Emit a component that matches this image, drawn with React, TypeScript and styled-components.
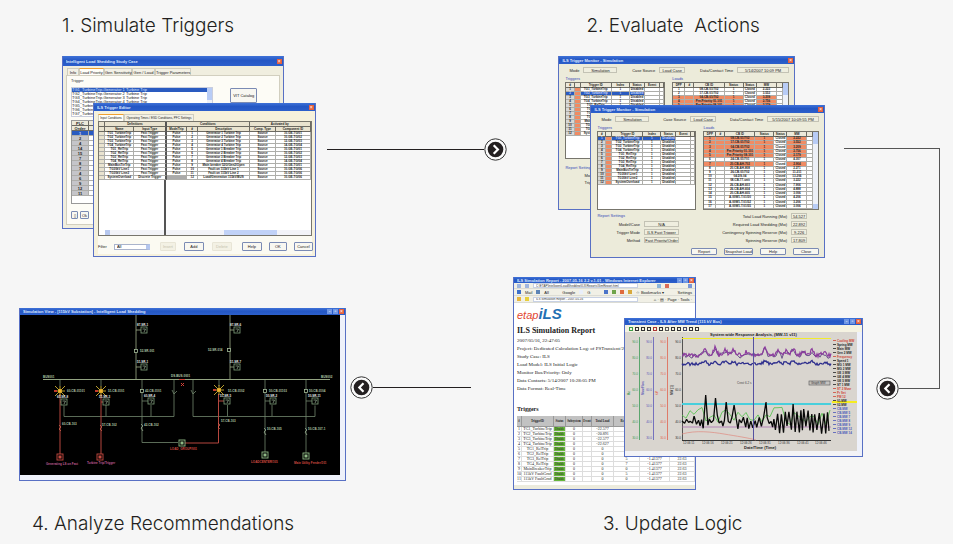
import React from "react";
import styled, { createGlobalStyle, css } from "styled-components";

const GlobalStyle = createGlobalStyle`
  * { box-sizing: border-box; }
  body { margin: 0; background: #f6f6f6; font-family: "Liberation Sans", Arial, sans-serif; color: #231f20; }
  button, input, select { font-family: inherit; }
`;

/* ---------- page layout ---------- */

const Page = styled.main`
  overflow: hidden;
`;

const Row = styled.div<{ $lower?: boolean }>`
  display: flex;
  align-items: flex-start;
  padding: ${(p) => (p.$lower ? "0 13px 8px 19px" : "14px 13px 19px 62px")};
  ${(p) => p.$lower && css`align-items: flex-end;`}
`;

const Step = styled.section<{ $grow: number }>`
  flex: ${(p) => p.$grow} 1 0;
  min-width: 0;
`;

const Heading = styled.h2<{ $indent: number; $gap?: number }>`
  margin: ${(p) => p.$gap ?? 0}px 0 0 ${(p) => p.$indent}px;
  font-family: Inter, "Liberation Sans", Arial, sans-serif;
  font-size: 19px;
  line-height: 24px;
  font-weight: 300;
  white-space: pre;
`;

const Stack = styled.div<{ $gap?: number }>`
  display: grid;
  margin-top: ${(p) => p.$gap ?? 0}px;
`;

const Link = styled.div<{ $grow: number; $margin: string; $reverse?: boolean; $top?: boolean }>`
  flex: ${(p) => p.$grow} 1 0;
  display: flex;
  flex-direction: ${(p) => (p.$reverse ? "row-reverse" : "row")};
  align-items: center;
  margin: ${(p) => p.$margin};
  ${(p) => p.$top && css`align-self: flex-start;`}
`;

const Line = styled.span`
  flex: 1;
  height: 1px;
  background: #231f20;
`;

const CornerDown = styled.div`
  flex: 95 1 0;
  align-self: stretch;
  margin: 134px 0 -19px 19px;
  border: solid #555;
  border-width: 1px 1px 0 0;
`;

const CornerBack = styled.div`
  flex: 64 1 0;
  align-self: flex-start;
  display: flex;
  align-items: flex-end;
  height: 123px;
  margin-left: 13px;
`;

const CornerEdge = styled.span`
  flex: 1;
  height: 112px;
  margin-bottom: 11px;
  border: solid #555;
  border-width: 0 1px 1px 0;
`;

const ArrowSvg = styled.svg`
  flex: none;
  width: 23px;
  height: 23px;
`;

function Arrow({ left }: { left?: boolean }) {
  return (
    <ArrowSvg viewBox="0 0 23 23">
      <circle cx="11.5" cy="11.5" r="10.7" fill="#fafafa" stroke="#333" strokeWidth="1" />
      <circle cx="11.5" cy="11.5" r="7.8" fill="#231f20" />
      <path d={left ? "M13.5 7.2 9.3 11.5 13.5 15.8" : "M9.7 7.2 13.9 11.5 9.7 15.8"} fill="none" stroke="#fff" strokeWidth="2.2" />
    </ArrowSvg>
  );
}

/* ---------- window chrome ---------- */

const Frame = styled.article<{ $margin?: string; $height: number; $bg?: string }>`
  grid-area: 1 / 1;
  display: flex;
  flex-direction: column;
  min-width: 0;
  min-height: ${(p) => p.$height}px;
  margin: ${(p) => p.$margin ?? "0"};
  border: 1px solid #5870c4;
  border-top: 0;
  background: ${(p) => p.$bg ?? "#f0eedf"};
  overflow: hidden;
  font-size: 4px;
  line-height: 5px;
  white-space: nowrap;
  color: #222;
`;

const TitleBar = styled.header<{ $h: number }>`
  flex: none;
  display: flex;
  align-items: center;
  gap: 1px;
  height: ${(p) => p.$h}px;
  padding: 0 1px 0 3px;
  background: linear-gradient(#3f72d8, #2457c4 45%, #2c5fcb);
  color: #dfe8ff;
  font-weight: 700;
  font-size: 4px;
`;

const TitleText = styled.span`
  flex: 1;
  overflow: hidden;
`;

const Caption = styled.button<{ $close?: boolean }>`
  width: 5px;
  height: 5px;
  padding: 0;
  border: 0;
  background: ${(p) => (p.$close ? "#e5603c" : "#6f96e4")};
  color: #fff;
  font-size: 5px;
  line-height: 5px;
`;

function Bar({ title, h = 8, full }: { title: string; h?: number; full?: boolean }) {
  return (
    <TitleBar $h={h}>
      <TitleText>{title}</TitleText>
      {full && <Caption aria-label="Minimize">-</Caption>}
      {full && <Caption aria-label="Maximize">▫</Caption>}
      <Caption $close aria-label="Close">×</Caption>
    </TitleBar>
  );
}

const Tabs = styled.nav<{ $h: number }>`
  flex: none;
  display: flex;
  align-items: flex-end;
  height: ${(p) => p.$h}px;
  padding: 0 4px;
`;

const Tab = styled.button<{ $on?: boolean; $w: number; $small?: boolean }>`
  width: ${(p) => p.$w}px;
  height: 7px;
  padding: 0;
  border: 1px solid #cfcdbf;
  border-bottom: 0;
  border-top-color: ${(p) => (p.$on ? "#f0a030" : "#cfcdbf")};
  background: ${(p) => (p.$on ? "#fffef8" : "#f3f1e6")};
  color: #222;
  font-size: ${(p) => (p.$small ? 3 : 4)}px;
  line-height: 5px;
  white-space: nowrap;
`;

const Push = styled.button<{ $w: number; $h?: number; $flat?: boolean }>`
  flex: none;
  width: ${(p) => p.$w}px;
  height: ${(p) => p.$h ?? 9}px;
  padding: 0;
  border: 1px solid ${(p) => (p.$flat ? "#e8e5d6" : "#7b8bb4")};
  border-radius: 1px;
  background: ${(p) => (p.$flat ? "#f3f1e4" : "#f8f7f1")};
  color: ${(p) => (p.$flat ? "#c4c1ae" : "#222")};
  font-size: 4px;
  line-height: 5px;
  white-space: nowrap;
`;

/* ---------- data grids ---------- */

const Table = styled.table<{ $head?: string }>`
  width: 100%;
  table-layout: fixed;
  border-collapse: separate;
  border-spacing: 0;
  font-size: 3px;
  line-height: 3px;
  font-weight: 700;
  text-align: center;
  color: #1c1c1c;
  th {
    height: 5px;
    padding: 0;
    border: solid #6c6a62;
    border-width: 0 1px 1px 0;
    background: ${(p) => p.$head ?? "#ece9da"};
    font-weight: inherit;
  }
`;

const Col = styled.col<{ $w: number }>`
  width: ${(p) => p.$w}px;
`;

const Td = styled.td<{ $bg?: string; $fg?: string; $h?: number }>`
  height: ${(p) => p.$h ?? 4}px;
  padding: 0;
  border: solid #aeaeaa;
  border-width: 0 1px 1px 0;
  background: ${(p) => p.$bg ?? "transparent"};
  color: ${(p) => p.$fg ?? "#1c1c1c"};
`;

const ORANGE = "#f08b63";
const BLUE = "#2a5bc0";

interface GridProps {
  cols: number[];
  head: React.ReactNode;
  rows: string[][];
  rowHeight?: number;
  headBg?: string;
  paint?: (r: number, c: number) => string | undefined;
}

function DataGrid({ cols, head, rows, rowHeight, headBg, paint }: GridProps) {
  return (
    <Table $head={headBg}>
      <colgroup>{cols.map((w, i) => <Col key={i} $w={w} />)}</colgroup>
      <thead>{head}</thead>
      <tbody>
        {rows.map((row, r) => (
          <tr key={r}>
            {row.map((text, c) => {
              const bg = paint?.(r, c);
              return <Td key={c} $h={rowHeight} $bg={bg} $fg={bg === BLUE ? "#cfdcff" : undefined}>{text}</Td>;
            })}
          </tr>
        ))}
      </tbody>
    </Table>
  );
}

const heads = (labels: string[]) => <tr>{labels.map((l, i) => <th key={i}>{l}</th>)}</tr>;

const Well = styled.div<{ $h: number }>`
  display: flex;
  flex-direction: column;
  justify-content: space-between;
  height: ${(p) => p.$h}px;
  min-width: 0;
  border: 1px solid #77756c;
  background: #fff;
  overflow: hidden;
`;

const Side = styled.div`
  display: flex;
  > :first-child { flex: 1; min-width: 0; }
`;

const VScroll = styled.div<{ $h?: number }>`
  flex: none;
  width: 5px;
  height: ${(p) => (p.$h ? `${p.$h}px` : "auto")};
  background: linear-gradient(#b8ccf6 0 12px, #eef1f8 12px calc(100% - 5px), #b8ccf6 calc(100% - 5px));
`;

/* ---------- step 1 ---------- */

const CaseBody = styled.div`
  flex: 1;
  margin: 0 3px 3px;
  padding: 2px 4px;
  border: 1px solid #d2cfbf;
  background: #fdfcf6;
`;

const CaseTop = styled.div`
  display: grid;
  grid-template-columns: 142fr 62fr;
`;

const List = styled.ul`
  flex: 1;
  margin: 0;
  padding: 0;
  list-style: none;
  background: #fff;
  color: #222;
`;

const Item = styled.li<{ $on?: boolean }>`
  height: 4px;
  line-height: 4px;
  background: ${(p) => (p.$on ? BLUE : "transparent")};
  color: ${(p) => (p.$on ? "#d7e2ff" : "#111")};
`;

const Label = styled.div<{ $h?: number; $blue?: boolean }>`
  height: ${(p) => p.$h ?? 6}px;
  color: ${(p) => (p.$blue ? "#3548b8" : "#333")};
`;

const ListBox = styled.div`
  display: flex;
  border: 1px solid #c9cddc;
`;

const Centered = styled.div<{ $top?: number }>`
  display: flex;
  justify-content: center;
  align-items: flex-start;
  padding-top: ${(p) => p.$top ?? 0}px;
`;

const PlcTable = styled.div`
  width: 96px;
  margin-top: 3px;
  height: 84px;
  border: 1px solid #999;
  background: #fff;
  overflow: hidden;
  table { font-size: 4px; }
`;

const ButtonLine = styled.div<{ $top?: number; $gap?: number }>`
  display: flex;
  align-items: center;
  gap: ${(p) => p.$gap ?? 2}px;
  margin-top: ${(p) => p.$top ?? 0}px;
`;

function StudyCase() {
  const triggers = [1, 2, 3, 4, 5, 6, 7].map((n) => `TG${n}_TurbineTrip-Generator ${n} Turbine Trip`);
  const order = ["1", "2", "4", "14", "15", "7", "8", "7", "4", "6", "9", "12", "11"];
  return (
    <Frame $height={173} $margin="0 32px 28px 0">
      <Bar title="Intelligent Load Shedding Study Case" h={10} />
      <Tabs $h={9}>
        <Tab $w={12}>Info</Tab><Tab $w={25} $on>Load Priority</Tab><Tab $w={28}>Gen Sensitivity</Tab>
        <Tab $w={23}>Gen / Load</Tab><Tab $w={36}>Trigger Parameters</Tab>
      </Tabs>
      <CaseBody>
        <CaseTop>
          <div>
            <Label $h={9}>Trigger</Label>
            <ListBox>
              <List>{triggers.map((t, i) => <Item key={t} $on={i === 0}>{t}</Item>)}</List>
              <VScroll />
            </ListBox>
          </div>
          <Centered $top={10}><Push $w={27} $h={15}>VIT Catalog</Push></Centered>
        </CaseTop>
        <PlcTable>
          <DataGrid
            cols={[17, 25, 54]}
            rowHeight={5}
            head={<><tr><th>PLC</th><th>Priority</th><th>Load</th></tr><tr><th>Order</th><th>Cat.</th><th>ID</th></tr></>}
            rows={order.map((n) => [n, "", ""])}
            paint={(r, c) => (r === 0 ? BLUE : c === 0 ? "#c5c5c9" : undefined)}
          />
        </PlcTable>
        <ButtonLine $top={7}><Push $w={7} $h={8}>▯</Push><Push $w={9} $h={8}>Ok</Push></ButtonLine>
      </CaseBody>
    </Frame>
  );
}

const EditorBody = styled.div`
  flex: 1;
  display: flex;
  flex-direction: column;
  margin: 0 3px 2px 4px;
  background: #fbfaf2;
`;

const EditorGrid = styled.div`
  flex: 1;
  background: linear-gradient(90deg, #e9e3cf 0 6px, transparent 6px);
  th:nth-child(3), td:nth-child(3), tr:first-child > th:nth-child(2) { border-right: 2px solid #555; }
  tr:first-child > th:nth-child(3) { border-right: 1px solid #6c6a62; }
`;

const HScroll = styled.div`
  display: grid;
  grid-template-columns: 67fr 58fr 52fr 34fr;
  height: 5px;
  background: #f2f3f8;
  > :nth-child(1) { border-right: 2px solid #555; background: linear-gradient(90deg, #fff 0 6px, #b7c8ee 6px 11px, #f2f3f8 11px); }
  > :nth-child(3) { background: #c1d2f7; }
`;

const SplitSpace = styled.div`
  display: grid;
  grid-template-columns: 67fr 144fr;
  height: 52px;
  > :first-child { border-right: 2px solid #555; }
`;

const Footer = styled.footer<{ $gap: number; $top: number }>`
  display: flex;
  align-items: center;
  gap: ${(p) => p.$gap}px;
  padding-top: ${(p) => p.$top}px;
`;

const Select = styled.select`
  appearance: none;
  width: 36px;
  height: 6px;
  padding: 0 2px;
  border: 1px solid #aab4cc;
  border-right: 4px solid #b4c6ee;
  border-radius: 0;
  background: #fff;
  font-size: 4px;
  line-height: 4px;
`;

const Group = styled.div<{ $gap: number; $end?: boolean }>`
  display: flex;
  align-items: center;
  gap: ${(p) => p.$gap}px;
  ${(p) => p.$end && css`margin-left: auto;`}
`;

function TriggerEditor() {
  const names: [string, string, string, string][] = [
    ["TG1_TurbineTrip", "Generator 1 Turbine Trip", "Source", "10-GE-TG/01"],
    ["TG2_TurbineTrip", "Generator 2 Turbine Trip", "Source", "10-GE-TG/02"],
    ["TG3_TurbineTrip", "Generator 3 Turbine Trip", "Source", "12-GE-TG/03"],
    ["TG4_TurbineTrip", "Generator 4 Turbine Trip", "Source", "14-GE-TG/04"],
    ["TG1_RelTrip", "Generator 1 Breaker Trip", "Source", "10-GE-TG/01"],
    ["TG2_RelTrip", "Generator 2 Breaker Trip", "Source", "10-GE-TG/02"],
    ["TG3_RelTrip", "Generator 3 Breaker Trip", "Source", "12-GE-TG/03"],
    ["TG4_RelTrip", "Generator 4 Breaker Trip", "Source", "14-GE-TG/04"],
    ["MainBusTieTrip", "Main breaker 52G/Gen2/Open", "Source", "10-GE-TG/01"],
    ["TG30kV Line1", "Fault on 115kV Line 1", "Source", "10-GE-TG/06"],
    ["TG30kV Line2", "Fault on 115kV Line 2", "Source", "10-GE-TG/06"],
    ["SystemOverload", "Load/Generation 115kV/BUS", "Source", "10-GE-TG/06"],
  ];
  return (
    <Frame $height={154} $margin="47px 0 0 31px" $bg="#f6f1dc">
      <Bar title="ILS Trigger Editor" />
      <Tabs $h={10}>
        <Tab $w={26} $on $small>Input Conditions</Tab><Tab $w={70} $small>Operating Times / ESD Conditions, PFC Settings</Tab>
      </Tabs>
      <EditorBody>
        <Well $h={115}>
          <EditorGrid>
            <DataGrid
              cols={[6, 29, 32, 20, 11, 51, 26, 34]}
              headBg="#e9e3cf"
              head={
                <>
                  <tr><th /><th colSpan={2}>Definitions</th><th colSpan={3}>Conditions</th><th colSpan={2}>Activated by</th></tr>
                  {heads(["", "Name", "Input Type", "Mode/Trip", "#", "Description", "Comp. Type", "Component ID"])}
                </>
              }
              rows={names.map(([name, d, type, id], i) => ["", name, i === 11 ? "Discrete Trigger" : "Fast Trigger", i === 11 ? "" : "Pulse", `${i + 1}`, d, type, id])}
              paint={(r, c) => (c === 0 ? "#e9e3cf" : r === 11 && c === 3 ? "#aaa" : undefined)}
            />
          </EditorGrid>
          <SplitSpace><i /><i /></SplitSpace>
          <HScroll><i /><i /><i /><i /></HScroll>
        </Well>
        <Footer $gap={10} $top={6}>
          <Group $gap={7}>
            <label htmlFor="filter">Filter</label>
            <Select id="filter" defaultValue="All"><option>All</option></Select>
          </Group>
          <Group $gap={8}>
            <Push $w={16} $flat disabled>Insert</Push><Push $w={20}>Add</Push><Push $w={20} $flat disabled>Delete</Push>
          </Group>
          <Group $gap={7} $end>
            <Push $w={20}>Help</Push><Push $w={18}>OK</Push><Push $w={19}>Cancel</Push>
          </Group>
        </Footer>
      </EditorBody>
    </Frame>
  );
}

/* ---------- step 2 ---------- */

const MonitorBody = styled.div`
  flex: 1;
  padding: 3px 5px 0 6px;
`;

const Fields = styled.div`
  display: flex;
  justify-content: space-between;
  padding: 0 0 0 4px;
`;

const Field = styled.label`
  display: flex;
  align-items: center;
  justify-content: flex-end;
  gap: 4px;
`;

const Input = styled.input<{ $w: number }>`
  width: ${(p) => p.$w}px;
  height: 6px;
  padding: 0;
  border: 1px solid #c3c2b4;
  background: #efeedf;
  color: #222;
  font-size: 4px;
  line-height: 4px;
  text-align: center;
`;

const Tables = styled.div`
  display: grid;
  grid-template-columns: 99fr 116fr;
  column-gap: 7px;
  margin-top: 3px;
`;

const Lower = styled.div`
  display: flex;
  justify-content: space-between;
  padding: 3px 12px 0 0;
`;

const FieldColumn = styled.div<{ $indent?: number }>`
  display: grid;
  row-gap: 2px;
  padding-left: ${(p) => p.$indent ?? 0}px;
`;

const Actions = styled.div`
  display: flex;
  justify-content: flex-end;
  gap: 7px;
  margin-top: 5px;
`;

const triggerIds = ["TG1_TurbineTrip", "TG2_TurbineTrip", "TG3_TurbineTrip", "TG4_TurbineTrip", "TG1_RelTrip", "TG2_RelTrip", "TG3_RelTrip", "TG4_RelTrip", "MainBusTieTrip", "TG30kV Line1", "TG30kV Line2", "SystemOverload"];
const breakerIds = ["08-CB-01/702", "17-CB-01/702", "04-CB-01/702", "Pre-Priority 01-101", "Pre-Priority 08-101", "24-CB-01/701", "20-CB-AH-702", "20-CB-AH-808", "26-CB-01/702", "04-DS-04", "08-CB-77-unit", "26-CB-AH-603", "26-CB-AH-604", "20-CB-AH-605", "A-00W1-T.01/50", "A-00W1-T.01/52", "A-00W1-T.01/55"];
const megawatts = ["2.222", "3.552", "3.209", "2.756", "2.179", "4.307", "2.904", "2.271", "11.211", "13.206", "3.222", "7.906", "4.888", "3.006", "4.206", "3.206", "3.006"];

function MonitorTables({ height, orange, selected }: { height: number; orange: (r: number) => boolean; selected: number }) {
  return (
    <Tables>
      <div>
        <Label $blue>Triggers</Label>
        <Well $h={height}>
          <DataGrid
            cols={[8, 6, 31, 18, 15, 15, 4]}
            head={heads(["#", "", "Trigger ID", "Index", "Status", "Event", ""])}
            rows={triggerIds.map((id, i) => [`${i + 1}`, "", id, "1", "Disabled", "", ""])}
            paint={(r, c) => (c === 1 ? ORANGE : r === selected && c < 5 ? BLUE : c === 0 ? "#d8d8d6" : undefined)}
          />
        </Well>
      </div>
      <div>
        <Label $blue>Loads</Label>
        <Well $h={height}>
          <Side>
            <DataGrid
              cols={[12, 9, 30, 19, 13, 20, 6]}
              head={heads(["DPP", "#", "CB ID", "Status", "Status", "MW", ""])}
              rows={breakerIds.map((id, i) => [`${i + 1}`, "", id, "1", "Closed", megawatts[i], ""])}
              paint={(r, c) => (orange(r) && c !== 4 && c !== 6 ? ORANGE : undefined)}
            />
            <VScroll $h={height - 2} />
          </Side>
        </Well>
      </div>
    </Tables>
  );
}

function MonitorFields({ time }: { time: string }) {
  return (
    <Fields>
      <Field>Mode<Input $w={34} readOnly value="Simulation" /></Field>
      <Field>Case Source<Input $w={26} readOnly value="Load Case" /></Field>
      <Field>Data/Contact Time<Input $w={52} readOnly value={time} /></Field>
    </Fields>
  );
}

function MonitorBack() {
  return (
    <Frame $height={154} $margin="0 30px 48px 0" $bg="#ecebda">
      <Bar title="ILS Trigger Monitor - Simulation" />
      <MonitorBody>
        <MonitorFields time="5/14/2007 10:09 PM" />
        <MonitorTables height={77} orange={(r) => r > 1} selected={1} />
        <Label />
        <Label $blue $h={8}>Report Settings</Label>
        <FieldColumn $indent={19}><span>Mod</span><span>Trig</span></FieldColumn>
      </MonitorBody>
    </Frame>
  );
}

function MonitorFront() {
  return (
    <Frame $height={153} $margin="49px 0 0 32px" $bg="#ecebda">
      <Bar title="ILS Trigger Monitor - Simulation" />
      <MonitorBody>
        <MonitorFields time="5/15/2007 10:09:55 PM" />
        <MonitorTables height={79} orange={(r) => r < 5 || r === 6} selected={0} />
        <Lower>
          <div>
            <Label $blue $h={8}>Report Settings</Label>
            <FieldColumn $indent={19}>
              <Field>Model/Case<Input $w={35} readOnly value="N/A" /></Field>
              <Field>Trigger Mode<Input $w={35} readOnly value="ILS Fast Trigger" /></Field>
              <Field>Method<Input $w={35} readOnly value="Fast Priority/Order" /></Field>
            </FieldColumn>
          </div>
          <FieldColumn>
            <Field>Total Load Running (Mw)<Input $w={16} readOnly value="54.527" /></Field>
            <Field>Required Load Shedding (Mw)<Input $w={16} readOnly value="22.892" /></Field>
            <Field>Contingency Spinning Reserve (Mw)<Input $w={16} readOnly value="9.226" /></Field>
            <Field>Spinning Reserve (Mw)<Input $w={16} readOnly value="17.809" /></Field>
          </FieldColumn>
        </Lower>
        <Actions>
          <Push $w={26} $h={7}>Report</Push><Push $w={29} $h={7}>Snapshot Load</Push>
          <Push $w={26} $h={7}>Help</Push><Push $w={26} $h={7}>Close</Push>
        </Actions>
      </MonitorBody>
    </Frame>
  );
}

/* ---------- step 4: one-line diagram ---------- */

const Viewport = styled.div`
  flex: 1;
  display: flex;
  background: #eef1fa;
  padding: 0 5px 5px 0;
`;

const Drawing = styled.svg`
  display: block;
  width: 100%;
  height: auto;
`;

function Relay({ x, y, label }: { x: number; y: number; label: string }) {
  return (
    <g>
      <rect x={x - 3} y={y - 3} width="6" height="6" fill="#000" stroke="#7fa07c" strokeWidth="0.8" />
      <path d={`M${x - 1.5} ${y - 1}h3l-1.5 3`} stroke="#b8d4b4" strokeWidth="0.6" fill="none" />
      <text x={x - 7} y={y - 4} fill="#e8ece8" fontSize="3" fontWeight="700">{label}</text>
    </g>
  );
}

function Star({ x, y }: { x: number; y: number }) {
  return (
    <g>
      <path d={`M${x - 5} ${y - 5}l10 10M${x + 5} ${y - 5}l-10 10M${x} ${y - 5}v10M${x - 5} ${y}h10`} stroke="#e8c63a" strokeWidth="0.8" />
      <circle cx={x} cy={y} r="2" fill="#f0b52e" />
      <rect x={x - 6} y={y - 1} width="3" height="2" fill="#c23a2c" />
    </g>
  );
}

function Load({ x, y, red }: { x: number; y: number; red?: boolean }) {
  const c = red ? "#c64a40" : "#8fb985";
  return (
    <g>
      <rect x={x - 3} y={y - 3} width="6" height="6" fill="#000" stroke={c} strokeWidth="0.9" />
      <rect x={x - 1.5} y={y - 1.5} width="3" height="3" fill={c} />
    </g>
  );
}

function Network() {
  return (
    <Frame $height={173} $bg="#000">
      <Bar title="Simulation View - [115kV Substation] - Intelligent Load Shedding" h={7} full />
      <Viewport>
        <Drawing viewBox="20 315 320 160" fontSize="3" fontWeight="700" fontFamily="Liberation Sans, sans-serif">
          <rect x="20" y="315" width="320" height="160" fill="#000" />
          <g fill="none" stroke="#71876d" strokeWidth="0.8">
            <path d="M136 315v64.5M230 315v64.5M136 330h5M136 367h5M230 330h5M230 367h5" stroke="#a0ac88" />
            <path d="M43 379.500H330" stroke="#93a482" strokeWidth="1.1" />
            <path d="M142 380v62.500h36M174 380v36.500H64v-11M106 416v-11M151 416v-11M193 380v36.500h122v-11M227.500 416v-11M272 416v-11M265 380v72M306 380v73M60 380v6M101 380v6M219 380v6" />
            <path d="M142 401h6M265 401h6M306 401h6M172 390l2 4 3-3M191 390l2 4 3-3" />
          </g>
          <path d="M60 394v60M101 394v60M185 443h33.500V394M60 402h2M101 402h2M219 401h5" fill="none" stroke="#b6473f" strokeWidth="1" />
          <path d="M59 425l2 2-2 2 2 2M100 425l2 2-2 2 2 2M218 423l2 2-2 2 2 2" fill="none" stroke="#df6a55" strokeWidth="0.7" />
          <path d="M141 424l2 2-2 2 2 3M264 428l2 2-2 2 2 3M305 428l2 2-2 2 2 3" fill="none" stroke="#a9bfa0" strokeWidth="0.7" />
          <path d="M179 379.500h6M181 383l3 3M184 383l-3 3" stroke="#d34237" strokeWidth="1" />
          {[[136, 351], [229, 350], [142, 391], [265, 391], [306, 391]].map(([x, y]) => (
            <rect key={`${x}-${y}`} x={x - 1.5} y={y - 1.5} width="3" height="3" fill="#000" stroke="#a6bd9b" strokeWidth="0.8" />
          ))}
          <Star x={60} y={391} /><Star x={101} y={391} /><Star x={219} y={390} />
          <Relay x={144} y={330} label="87-SR-1" /><Relay x={144} y={367} label="51-SR-1" />
          <Relay x={237} y={330} label="87-SR-6" /><Relay x={237} y={367} label="51-SR-7" />
          <Relay x={64} y={402} label="60-SR-8" /><Relay x={106} y={402} label="51-SR-3" />
          <Relay x={151} y={401} label="60-SR-4" /><Relay x={227} y={401} label="51-SR-5" />
          <Relay x={273} y={401} label="50-SR-2" /><Relay x={315} y={401} label="50-SR-11" />
          <Load x={60} y={457} red /><Load x={100} y={457} red /><Load x={182} y={443} /><Load x={265} y={455} /><Load x={306} y={456} />
          <g fill="#b3c8a8">
            <text x="140" y="352">52-SR-001</text><text x="208" y="351">52-SR-014</text>
            <text x="43" y="378">BUS001</text><text x="321" y="378">BUS002</text><text x="171" y="377">DS-BUS-0001</text>
            <text x="67" y="392">60-CB-01101</text><text x="108" y="392">51-CB-0101</text><text x="145" y="392">42-CB-0101</text>
            <text x="228" y="392">51-CB-0102</text><text x="269" y="392">50-CB-01103</text><text x="309" y="392">50-CB-0104</text>
            <text x="62" y="425">60-CB-103</text><text x="102" y="426">57-CB-102</text><text x="144" y="426">42-CB-102</text>
            <text x="221" y="422">57-CB-103</text><text x="267" y="430">50-CB-105</text><text x="308" y="430">50-CB-107-1</text>
          </g>
          <g fill="#bf5d92"><text x="46" y="465">Generating LS on Fast</text><text x="87" y="464">Turbine Trip/Trigger</text></g>
          <g fill="#d34b40"><text x="170" y="450">LOAD_GROUP/001</text><text x="251" y="463">LOADCENTER/105</text><text x="294" y="464">Main Utility Feeder/101</text></g>
        </Drawing>
      </Viewport>
    </Frame>
  );
}

/* ---------- step 3: report and chart ---------- */

const BrowserLine = styled.div<{ $h: number }>`
  flex: none;
  display: flex;
  align-items: center;
  gap: 4px;
  height: ${(p) => p.$h}px;
  padding: 0 3px;
  background: #f1f0e6;
  border-bottom: 1px solid #dcdcd4;
`;

const Address = styled.input`
  flex: none;
  width: 60%;
  height: 5px;
  padding: 0 2px;
  border: 1px solid #c8d1e4;
  background: #fff;
  color: #333;
  font-size: 3px;
  line-height: 3px;
`;

const Dot = styled.i<{ $c: string }>`
  width: 4px;
  height: 4px;
  background: ${(p) => p.$c};
`;

const Spacer = styled.span`
  flex: 1;
`;

const Doc = styled.div`
  flex: 1;
  padding: 2px 0 0 3px;
  background: #fff;
  font-family: "Liberation Serif", "Times New Roman", serif;
  color: #222;
  font-size: 4px;
`;

const Logo = styled.div`
  display: flex;
  align-items: baseline;
  height: 18px;
  line-height: 18px;
  font-family: "Liberation Sans", Arial, sans-serif;
  font-style: italic;
  font-size: 11px;
  color: #e2452f;
`;

const LogoMark = styled.b`
  font-size: 15px;
  color: #2370b4;
`;

const DocTitle = styled.h3`
  margin: 3px 0 2px;
  font-size: 8px;
  line-height: 9px;
`;

const DocLine = styled.p`
  margin: 0;
  font-size: 5px;
  line-height: 8px;
`;

const DocSub = styled.h4`
  margin: 13px 0 3px;
  font-size: 6px;
  line-height: 7px;
`;

const ReportTable = styled.div`
  table { font-family: "Liberation Serif", serif; font-size: 4px; font-weight: 400; line-height: 4px; }
  th { height: 11px; font-size: 3px; font-weight: 700; border-color: #999; }
  td { border-color: #ddd; }
  td:nth-child(3) { font-size: 3px; }
`;

const Status = styled.div`
  flex: none;
  height: 4px;
  background: #ecebdd;
`;

function Report() {
  const rows = [
    ["TG1_TurbineTrip", "-22.577", "6"], ["TG2_TurbineTrip", "-20.891", "5"], ["TG3_TurbineTrip", "-22.577", "6"],
    ["TG4_TurbineTrip", "-22.627", "0"], ["TG1_RelTrip", "0", "4"], ["TG2_RelTrip", "0", "0"], ["TG3_RelTrip", "0", "5"],
    ["TG4_RelTrip", "0", "7"], ["MainBreakerTrip", "0", "0"], ["115kV FaultGrnd", "0", "5"], ["115kV FaultGrnd", "0", "0"],
  ];
  return (
    <Frame $height={213} $margin="0 167px 0 0" $bg="#fff">
      <Bar title="ILS Simulation Report - 2007-05-16 2.2 v.1.01 - Windows Internet Explorer" h={6} full />
      <BrowserLine $h={6}>
        <Dot $c="#9fb6e0" /><Dot $c="#9fb6e0" />
        <Address readOnly aria-label="Address" value="C:\ETAP\IntelligentLoadShedding\ILS\Reports\SimReport.html" />
        <Spacer /><Dot $c="#8db5da" /><Dot $c="#d96c58" /><Spacer /><Dot $c="#7997d8" />
      </BrowserLine>
      <BrowserLine $h={7}>
        <Dot $c="#3d6fca" />Mail<Dot $c="#5c84b6" />All<Spacer />Google<Dot $c="#e9eefa" />G<Spacer />
        <Dot $c="#4c74c9" /><Dot $c="#6ea44b" /><Dot $c="#df6a3d" /><Dot $c="#d8a93c" />☆ Bookmarks ▾<Spacer />Settings
      </BrowserLine>
      <BrowserLine $h={7}>
        <Dot $c="#e8b53c" /><Dot $c="#e8cf3c" /><Address readOnly aria-label="Page" value="ILS Simulation Report - 2007-05-16" />
        <Spacer />⌂ · ▤ · Page · Tools ·
      </BrowserLine>
      <Doc>
        <Logo>etap<LogoMark>iLS</LogoMark></Logo>
        <DocTitle>ILS Simulation Report</DocTitle>
        <DocLine>2007/05/16, 22:47:05</DocLine>
        <DocLine>Project: Dedicated Calculation Log: of PSTransient/2007</DocLine>
        <DocLine>Study Case: ILS</DocLine>
        <DocLine>Load Model: ILS Initial Logic</DocLine>
        <DocLine>Monitor Bus/Priority: Only</DocLine>
        <DocLine>Data Contacts: 5/14/2007 10:28:05 PM</DocLine>
        <DocLine>Data Format: Real-Time</DocLine>
        <DocSub>Triggers</DocSub>
        <ReportTable>
          <DataGrid
            cols={[5, 32, 12, 17, 9, 22, 26, 30, 25]}
            rowHeight={5}
            headBg="#c2c2c2"
            head={heads(["#", "TriggerID", "Status", "Subsystem", "Event", "Total Load", "Required", "Spinning", "Reserve"])}
            rows={rows.map(([id, load, req], i) => [`${i + 1}`, id, "Disable", "0", "", load, req, "-1.41377", "22.63"])}
            paint={(_, c) => (c === 2 ? "#68b83c" : undefined)}
          />
        </ReportTable>
      </Doc>
      <Status />
    </Frame>
  );
}

const ToolRow = styled.div`
  flex: none;
  display: flex;
  align-items: center;
  gap: 2px;
  height: 7px;
  padding: 0 4px;
  background: #f5f3e2;
`;

const Tool = styled.button<{ $c: string }>`
  width: 4px;
  height: 4px;
  padding: 0;
  border: 1px solid ${(p) => p.$c};
  background: #f5f3e2;
`;

const ChartFrame = styled.div`
  flex: 1;
  background: #d9d5cf;
  border-right: 5px solid #eef1fa;
  border-bottom: 5px solid #f3f3f6;
`;

/* Deterministic jagged trace between x=682 and x=831. */
function trace(seed: number, base: number, step: number, jitter: number, peaks: number[][]) {
  let s = seed;
  const pts: string[] = [];
  for (let x = 682; x <= 831; x += step) {
    s = (s * 9301 + 49297) % 233280;
    const lift = peaks.reduce((sum, [px, h]) => sum + h * Math.max(0, 1 - Math.abs(x - px) / 4), 0);
    pts.push(`${x},${(base - lift + (s / 233280 - 0.5) * jitter).toFixed(1)}`);
  }
  return pts.join(" ");
}

/* Load trace that swings between a random crest and a random trough, with a few tall spikes. */
function surge() {
  const spikes: Record<number, number> = { 705: 395, 716: 398, 726: 402, 734: 405, 766: 402, 794: 404 };
  let s = 41;
  const rand = () => {
    s = (s * 9301 + 49297) % 233280;
    return s / 233280;
  };
  const pts: string[] = [];
  let x = 682;
  let up = true;
  while (x <= 831) {
    const spike = Object.entries(spikes).find(([c]) => Math.abs(Number(c) - x) <= 1);
    const depth = x > 774 ? 1 : 0;
    const y = up ? 415 - depth * 6 + rand() * 7 : 422 + depth * 4 + rand() * 8;
    pts.push(`${x.toFixed(1)},${(spike ? spike[1] : y).toFixed(1)}`);
    up = !up;
    x += 1.2 + rand() * 1.4;
  }
  return pts.join(" ");
}

const peaks = [[705, 8], [715, 7], [725, 6], [733, 5], [746, 3], [765, 7], [778, 4], [786, 4], [793, 7], [803, 4], [812, 5], [824, 3]];
const legend = ["Cooling MW", "Spring MW", "Main MW", "Gen 2 MW", "Frequency", "Speed 1", "MG 1 MW", "MG 2 MW", "GE 3 MW", "GE 4 MW", "GE 5 MW", "ST 1 MW", "ST 2 Mvar", "Pr Set", "PM 12", "01-MW", "02-MW", "CB-MW", "CB-MW 5", "CB-MW 7", "CB-MW 8", "CB-MW 9", "CB-MW 12", "CB-MW 14"];
const legendColor = (i: number) => (i === 0 || i === 4 || i === 12 || i === 13 || i === 14 ? "#cf4636" : i > 16 ? "#4b57b8" : "#252525");

function Axis({ x, color, title }: { x: number; color: string; title: string }) {
  return (
    <g fill={color} stroke="none">
      <rect x={x} y="337" width="0.8" height="103" />
      {Array.from({ length: 7 }, (_, i) => <text key={i} x={x - 1} y={343 + i * 16} fontSize="3" textAnchor="end">{90 - i * 10}.0</text>)}
      <text transform={`translate(${x - 9} 395) rotate(-90)`} fontSize="3" fontWeight="700">{title}</text>
    </g>
  );
}

function Chart() {
  return (
    <Frame $height={139} $margin="41px 0 33px 111px" $bg="#f5f3e2">
      <Bar title="Transient Case - ILS After MW Trend (115 kV Bus)" h={7} full />
      <ToolRow>{["#3c9a45", "#333", "#333", "#333", "#a33", "#333", "#555", "#333", "#333", "#446", "#333", "#333"].map((c, i) => <Tool key={i} $c={c} aria-label={`Tool ${i + 1}`} />)}</ToolRow>
      <ChartFrame>
        <Drawing viewBox="625 332 232 118" fontSize="4" fontFamily="Liberation Sans, sans-serif">
          <text x="710" y="336" fontWeight="700" fill="#222">System wide Response Analysis, (MW-11 v11)</text>
          <Axis x={639} color="#3c9a55" title="Hz" /><Axis x={653} color="#5c58b8" title="MvarFlow" />
          <Axis x={667} color="#e06650" title="kV" /><Axis x={682} color="#333" title="MW (1)" />
          <path d="M682 338.500h149" stroke="#f2ec2c" strokeWidth="1" />
          <path d="M682 440.500h149" stroke="#333" strokeWidth="1" />
          <path d="M682 404h149" stroke="#48cfdc" strokeWidth="2" />
          <path d="M682 427h149" stroke="#a563ac" strokeWidth="0.7" />
          <path d="M682 434c14-4 30-2 42 0s25 4 32 6" stroke="#df8a80" strokeWidth="0.7" fill="none" />
          <polyline points={trace(31, 416, 4, 18, [[715, 10]])} fill="none" stroke="#4cc045" strokeWidth="0.8" />
          <polyline points={trace(77, 356, 2, 5, peaks)} fill="none" stroke="#68538b" strokeWidth="1" />
          <polyline points={trace(12, 355, 1, 4, peaks)} fill="none" stroke="#8c3c9e" strokeWidth="1.2" />
          <polyline points={trace(5, 364, 1, 3, peaks.map(([x, h]) => [x, h * 0.5]))} fill="none" stroke="#30308e" strokeWidth="1.3" />
          <polyline points={surge()} fill="none" stroke="#080808" strokeWidth="1.3" strokeLinejoin="bevel" />
          <path d="M753.500 337v103" stroke="#5551a0" strokeWidth="1" />
          <text x="737" y="384" fontSize="3" fill="#444">Crest 6.2 s</text>
          <rect x="809" y="381" width="21" height="4" fill="#c5c2bf" stroke="#555" strokeWidth="0.6" /><text x="811" y="384" fontSize="3" fill="#333">Graph MW</text>
          <rect x="832" y="401" width="25" height="2" fill="#f5ec20" />
          {legend.map((t, i) => (
            <g key={i} fill={legendColor(i)} fontSize="3" fontWeight="700"><rect x="833" y={340 + i * 4} width="3" height="0.8" /><text x="837" y={342 + i * 4}>{t}</text></g>
          ))}
          {[683, 702, 721, 740, 759, 778, 797, 815].map((x, i) => <text key={x} x={x} y="444" fontSize="3" fill="#333">12:06:{11 + i * 5}</text>)}
          <text x="744" y="449" fontWeight="700" fill="#222">Date/Time (Time)</text>
        </Drawing>
      </ChartFrame>
    </Frame>
  );
}

/* ---------- page ---------- */

export default function App() {
  return (
    <Page>
      <GlobalStyle />
      <Row>
        <Step $grow={254}>
          <Heading $indent={0}>1. Simulate Triggers</Heading>
          <Stack $gap={18}><StudyCase /><TriggerEditor /></Stack>
        </Step>
        <Link $grow={181} $margin="124px 51px 0 11px"><Line /><Arrow /></Link>
        <Step $grow={267}>
          <Heading $indent={28}>2. Evaluate  Actions</Heading>
          <Stack $gap={18}><MonitorBack /><MonitorFront /></Stack>
        </Step>
        <CornerDown />
      </Row>
      <Row $lower>
        <Step $grow={327}>
          <Network />
          <Heading $indent={13} $gap={31}>4. Analyze Recommendations</Heading>
        </Step>
        <Link $grow={121} $margin="99px 42px 0 4px" $reverse $top><Line /><Arrow left /></Link>
        <Step $grow={350}>
          <Stack><Report /><Chart /></Stack>
          <Heading $indent={90} $gap={22}>3. Update Logic</Heading>
        </Step>
        <CornerBack><Arrow left /><CornerEdge /></CornerBack>
      </Row>
    </Page>
  );
}
